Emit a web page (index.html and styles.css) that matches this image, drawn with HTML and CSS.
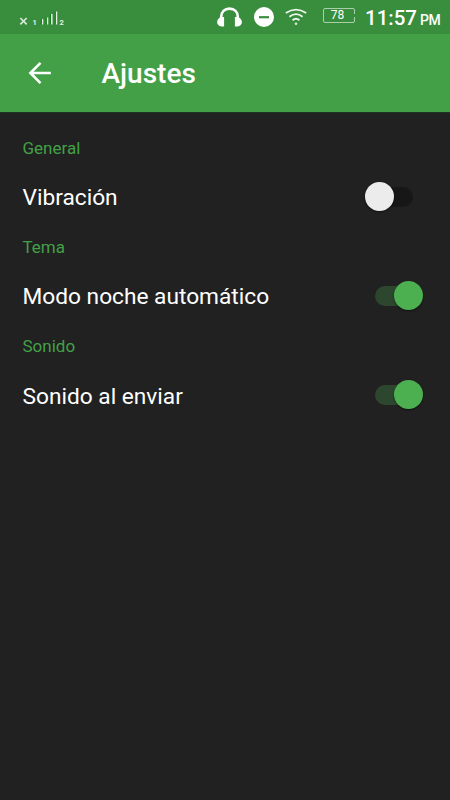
FILE: index.html
```html
<!DOCTYPE html>
<html lang="es">
<head>
  <meta charset="UTF-8">
  <title>Ajustes</title>
  <link rel="stylesheet" href="styles.css">
</head>
<body>
  <div class="status-bar">
    <svg class="signal" width="48" height="20" viewBox="0 0 48 20">
      <path d="M2.3 10l6.4 6.4M8.7 10l-6.4 6.4" stroke="#d5e8d6" stroke-width="1.7"/>
      <text x="14.6" y="17" class="sim">1</text>
      <path d="M24.5 11v5.5M29.5 9.5v7M33.8 6v10.5M38.5 3.5v13" stroke="#e4f0e4" stroke-width="1.5"/>
      <path d="M23.3 11v5.5M28.2 9.5v7M32.4 6v10.5M37.2 3.5v13" stroke="#137a1a" stroke-width="1"/>
      <text x="41.6" y="17" class="sim">2</text>
    </svg>
    <svg class="headphones" width="25" height="20" viewBox="0 0 25 20">
      <path d="M4.2 11.5V9.8C4.2 4.9 7.5 1.6 12.5 1.6s8.3 3.3 8.3 8.2v1.7" fill="none" stroke="#fff" stroke-width="2.6"/>
      <path d="M7.1 9.9v9.5H4.6C1.8 19.4.1 17.5.1 15.1c0-2.7 1.9-4.9 4.9-5.2zM17.9 9.9v9.5h2.5c2.8 0 4.5-1.900 4.500-4.300 0-2.700-1.900-4.900-4.900-5.200z" fill="#fff"/>
    </svg>
    <svg class="dnd" width="20" height="20" viewBox="0 0 20 20">
      <circle cx="10" cy="10" r="10" fill="#fff"/>
      <path d="M5 10.2h10" stroke="#388e3c" stroke-width="2.2"/>
    </svg>
    <svg class="wifi" width="22" height="18" viewBox="0 0 22 18">
      <path d="M.8 5Q11-1.8 21.2 5M4.4 8.7Q11 3.7 17.6 8.7M7.6 12.2Q11 9.4 14.4 12.2" fill="none" stroke="#eef6ee" stroke-width="1.8"/>
      <circle cx="11" cy="15.8" r="1.3" fill="#d5e8d6"/>
    </svg>
    <div class="battery">78</div>
    <div class="clock">11:57<span class="meridiem">PM</span></div>
  </div>

  <header class="app-bar">
    <svg class="back" width="24" height="24" viewBox="0 0 24 24">
      <path d="M22.8 12H2.5M12.5 1.900L2.400 12l10.100 10.100" fill="none" stroke="#fff" stroke-width="2.6"/>
    </svg>
    <h1 class="title">Ajustes</h1>
  </header>

  <main class="settings">
    <section class="group">
      <h2 class="group-title">General</h2>
      <div class="row">
        <span class="label">Vibración</span>
        <span class="switch"></span>
      </div>
    </section>
    <section class="group">
      <h2 class="group-title">Tema</h2>
      <div class="row">
        <span class="label">Modo noche automático</span>
        <span class="switch on"></span>
      </div>
    </section>
    <section class="group">
      <h2 class="group-title">Sonido</h2>
      <div class="row">
        <span class="label">Sonido al enviar</span>
        <span class="switch on"></span>
      </div>
    </section>
  </main>
</body>
</html>
```

FILE: styles.css
```css
html, body {
  margin: 0;
  padding: 0;
  height: 100%;
  background: #212121;
  font-family: Roboto, sans-serif;
  color: #fff;
  overflow: hidden;
}

.status-bar {
  display: flex;
  align-items: flex-start;
  box-sizing: border-box;
  height: 34px;
  padding-top: 7px;
  background: #388e3c;
}

.signal {
  margin-left: 18px;
  margin-top: 1px;
}

.sim {
  font-size: 7.5px;
  font-weight: 700;
  fill: #e4f0e4;
}

.headphones {
  margin-left: 151px;
}

.dnd {
  margin-left: 12px;
}

.wifi {
  margin-left: 10.5px;
  margin-top: 1px;
}

.battery {
  position: relative;
  box-sizing: border-box;
  width: 32px;
  height: 15px;
  margin: 1px 0 0 16.5px;
  padding-right: 3px;
  border: 1px solid #a9cfab;
  border-radius: 2px;
  font-size: 12px;
  line-height: 13px;
  text-align: center;
}

.battery::after {
  content: "";
  position: absolute;
  top: 5px;
  right: -1px;
  width: 1px;
  height: 3px;
  background: #388e3c;
}

.clock {
  margin-left: 10px;
  font-size: 20.5px;
  font-weight: 500;
  line-height: 22px;
  white-space: nowrap;
}

.meridiem {
  margin-left: 3px;
  font-size: 14px;
  letter-spacing: -0.5px;
}

.app-bar {
  display: flex;
  align-items: center;
  height: 78px;
  background: #43a047;
  border-bottom: 1px solid #1c331d;
}

.back {
  margin-left: 28px;
}

.title {
  margin: 2px 0 0 49.5px;
  font-size: 28px;
  font-weight: 500;
  line-height: 36px;
}

.settings {
  padding: 19.5px 27.5px 0 22.5px;
}

.group {
  height: 99.3px;
}

.group-title {
  margin: 0;
  font-size: 17px;
  font-weight: 400;
  line-height: 30px;
  color: #43a047;
}

.row {
  display: flex;
  align-items: center;
  justify-content: space-between;
  height: 68px;
}

.label {
  padding-top: 2px;
  font-size: 22.7px;
}

.switch {
  position: relative;
  width: 48px;
  height: 20px;
}

.switch::before {
  content: "";
  position: absolute;
  inset: 0 10px 0 0;
  border-radius: 10px;
  background: #171717;
}

.switch::after {
  content: "";
  position: absolute;
  top: -5px;
  left: -10px;
  width: 29px;
  height: 29px;
  border-radius: 50%;
  background: #ececec;
  box-shadow: 0 1px 2px rgba(0,0,0,0.5);
}

.switch.on::before {
  background: #2d472e;
}

.switch.on::after {
  left: auto;
  right: 0;
  background: #4caf50;
}
```
